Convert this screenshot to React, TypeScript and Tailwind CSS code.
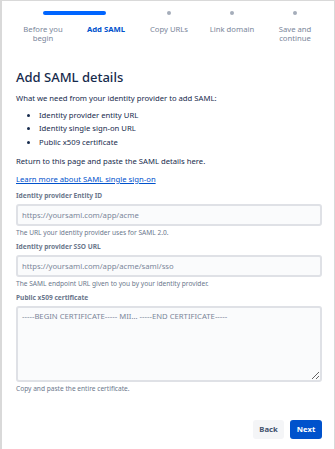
import type { ReactNode } from "react";

const STEPS = [
  { label: ["Before you", "begin"], state: "done" },
  { label: ["Add SAML"], state: "current" },
  { label: ["Copy URLs"], state: "todo" },
  { label: ["Link domain"], state: "todo" },
  { label: ["Save and", "continue"], state: "todo" },
];

function Stepper() {
  return (
    <div className="ml-[9.5px] grid w-[315px] grid-cols-5">
      {STEPS.map((s, i) => (
        <div key={i} className="flex flex-col items-center">
          <div className="flex h-[4px] w-full items-center justify-center">
            {s.state === "done" && <div className="ml-[50%] h-[4px] w-1/2 rounded-l-full bg-[#0065ff]" />}
            {s.state === "current" && <div className="mr-[50%] h-[4px] w-1/2 rounded-r-full bg-[#0065ff]" />}
            {s.state === "todo" && <div className="h-[3.5px] w-[3.5px] rounded-full bg-[#a5adba]" />}
          </div>
          <div
            className={
              "mt-[9.5px] text-center text-[7.7px] leading-[9px] " +
              (s.state === "current" ? "font-bold text-[#0052cc]" : "text-[#7a869a]")
            }
          >
            {s.label.map((l) => (
              <div key={l}>{l}</div>
            ))}
          </div>
        </div>
      ))}
    </div>
  );
}

function Field({ label, help, children }: { label: string; help: string; children: ReactNode }) {
  return (
    <div className="flex flex-col">
      <div className="text-[6.6px] font-bold leading-[10px] text-[#6b778c]">{label}</div>
      <div className="mt-[3px]">{children}</div>
      <div className="mt-[2px] text-[6.6px] leading-[10px] text-[#6b778c]">{help}</div>
    </div>
  );
}

const inputCls =
  "block h-[22px] w-full rounded-[3px] border-2 border-[#dfe1e6] bg-[#fafbfc] px-[4px] text-[7.7px] text-[#172b4d] outline-none placeholder:text-[#7a869a]";

export default function App() {
  return (
    <div
      className="h-[449px] w-[335px] overflow-hidden border-l-2 border-r border-t border-[#d9d9d9] bg-white text-[#172b4d]"
      style={{ fontFamily: '"Noto Sans", "Open Sans", sans-serif' }}
    >
      <div className="pt-[10px]">
        <Stepper />
      </div>

      <div className="pl-[14px] pr-[12px] pt-[26.5px]">
        <h1 className="text-[13px] font-medium leading-[16px]">Add SAML details</h1>
        <p className="mt-[7.5px] text-[7.7px] leading-[11px]">What we need from your identity provider to add SAML:</p>
        <ul className="mt-[5px] list-disc pl-[23px] text-[7.7px] leading-[13.7px]">
          <li>Identity provider entity URL</li>
          <li>Identity single sign-on URL</li>
          <li>Public x509 certificate</li>
        </ul>
        <p className="mt-[6px] text-[7.7px] leading-[11px]">Return to this page and paste the SAML details here.</p>
        <a href="#" className="mt-[7.3px] block text-[7.7px] leading-[11px] text-[#0052cc] underline">
          Learn more about SAML single sign-on
        </a>

        <div className="mt-[6.2px] flex flex-col gap-[4px]">
          <Field label="Identity provider Entity ID" help="The URL your identity provider uses for SAML 2.0.">
            <input placeholder="https://yoursaml.com/app/acme" className={inputCls} />
          </Field>
          <Field label="Identity provider SSO URL" help="The SAML endpoint URL given to you by your identity provider.">
            <input placeholder="https://yoursaml.com/app/acme/saml/sso" className={inputCls} />
          </Field>
          <Field label="Public x509 certificate" help="Copy and paste the entire certificate.">
            <textarea
              placeholder="-----BEGIN CERTIFICATE----- MII... -----END CERTIFICATE-----"
              className="block h-[76px] w-full rounded-[3px] border-2 border-[#dfe1e6] bg-[#fafbfc] px-[4px] pt-[3px] text-[7.7px] leading-[11px] text-[#172b4d] outline-none placeholder:text-[#7a869a]"
            />
          </Field>
        </div>

        <div className="mt-[26px] flex justify-end gap-[6px]">
          <button className="h-[19px] w-[31px] rounded-[3px] bg-[#f4f5f7] text-[7.7px] font-bold text-[#42526e]">
            Back
          </button>
          <button className="h-[19px] w-[32px] rounded-[3px] bg-[#0052cc] text-[7.7px] font-bold text-white">
            Next
          </button>
        </div>
      </div>
    </div>
  );
}
